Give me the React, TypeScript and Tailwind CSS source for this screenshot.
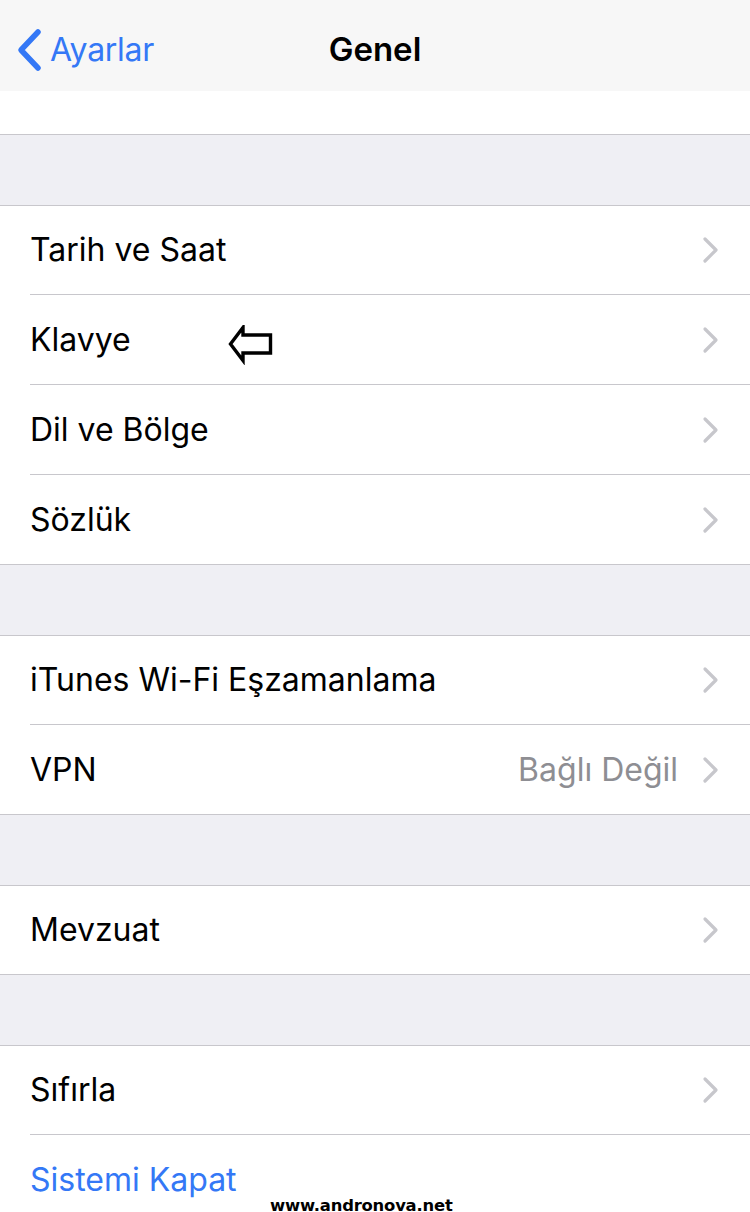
import { ReactNode } from 'react'

interface Row {
  label: string
  detail?: string
  blue?: boolean
  chevron?: boolean
  marker?: boolean
}

const GROUPS: Row[][] = [
  [
    { label: 'Tarih ve Saat', chevron: true },
    { label: 'Klavye', chevron: true, marker: true },
    { label: 'Dil ve Bölge', chevron: true },
    { label: 'Sözlük', chevron: true },
  ],
  [
    { label: 'iTunes Wi-Fi Eşzamanlama', chevron: true },
    { label: 'VPN', detail: 'Bağlı Değil', chevron: true },
  ],
  [{ label: 'Mevzuat', chevron: true }],
  [
    { label: 'Sıfırla', chevron: true },
    { label: 'Sistemi Kapat', blue: true },
  ],
]

function Chevron() {
  return (
    <svg width="18" height="28" viewBox="0 0 18 28" className="shrink-0">
      <path d="M3 3 L14 14 L3 25" fill="none" stroke="#c7c7cc" strokeWidth="3.2" strokeLinecap="round" strokeLinejoin="round" />
    </svg>
  )
}

// hand-drawn annotation arrow pointing at "Klavye"
function MarkerArrow() {
  return (
    <svg width="46" height="40" viewBox="0 0 46 40" className="absolute left-[228px] top-[30px]">
      <path
        d="M2.5 19 L15 2.5 L15 10 L42.5 10 L42.5 28 L15 28 L15 35.5 Z"
        fill="none"
        stroke="#000"
        strokeWidth="3.4"
        strokeLinejoin="miter"
      />
    </svg>
  )
}

function Group({ children }: { children: ReactNode }) {
  return <div className="bg-white border-y border-[#c8c7cc]">{children}</div>
}

function rowHeight(index: number, count: number) {
  if (count === 1) return 'h-[88px]'
  if (index > 0 && index < count - 1) return 'h-[90px]'
  return 'h-[89px]'
}

export default function App() {
  return (
    <div className="relative w-[750px] h-[1212px] overflow-hidden bg-[#efeff4] font-['Inter','Noto_Sans',sans-serif]">
      <div className="h-[91px] bg-[#f7f7f7] flex items-center relative">
        <div className="flex items-center pl-[15px] pt-[8px] text-[#3478f6]">
          <svg width="30" height="44" viewBox="0 0 30 44">
            <path d="M23 4 L6 22 L23 40" fill="none" stroke="#3478f6" strokeWidth="5.5" strokeLinecap="round" strokeLinejoin="round" />
          </svg>
          <span className="ml-[5px] text-[32px] tracking-[-0.3px]">Ayarlar</span>
        </div>
        <div className="absolute left-0 right-0 top-[8px] bottom-0 flex items-center justify-center pointer-events-none">
          <span className="text-[33px] font-semibold text-black">Genel</span>
        </div>
      </div>

      <div className="h-[44px] bg-white border-b border-[#c8c7cc]" />

      {GROUPS.map((group, gi) => (
        <div key={gi} className="pt-[70px]">
          <Group>
            {group.map((row, ri) => {
              const last = ri === group.length - 1
              return (
                <div
                  key={row.label}
                  className={`relative pl-[30px] flex items-stretch ${rowHeight(ri, group.length)}`}
                >
                  <div className={`flex-1 flex items-center pr-[30px] ${last ? '' : 'border-b border-[#c8c7cc]'}`}>
                    <span className={`flex-1 text-[32px] ${row.blue ? 'text-[#3478f6]' : 'text-black'}`}>
                      {row.label}
                    </span>
                    {row.detail && <span className="text-[32px] text-[#8e8e93] mr-[24px]">{row.detail}</span>}
                    {row.chevron && <Chevron />}
                  </div>
                  {row.marker && <MarkerArrow />}
                </div>
              )
            })}
          </Group>
        </div>
      ))}

      <div className="absolute left-[270px] top-[1194px] text-[16.4px] font-bold text-black font-['DejaVu_Sans',sans-serif] tracking-[-0.2px]">
        www.andronova.net
      </div>
    </div>
  )
}
